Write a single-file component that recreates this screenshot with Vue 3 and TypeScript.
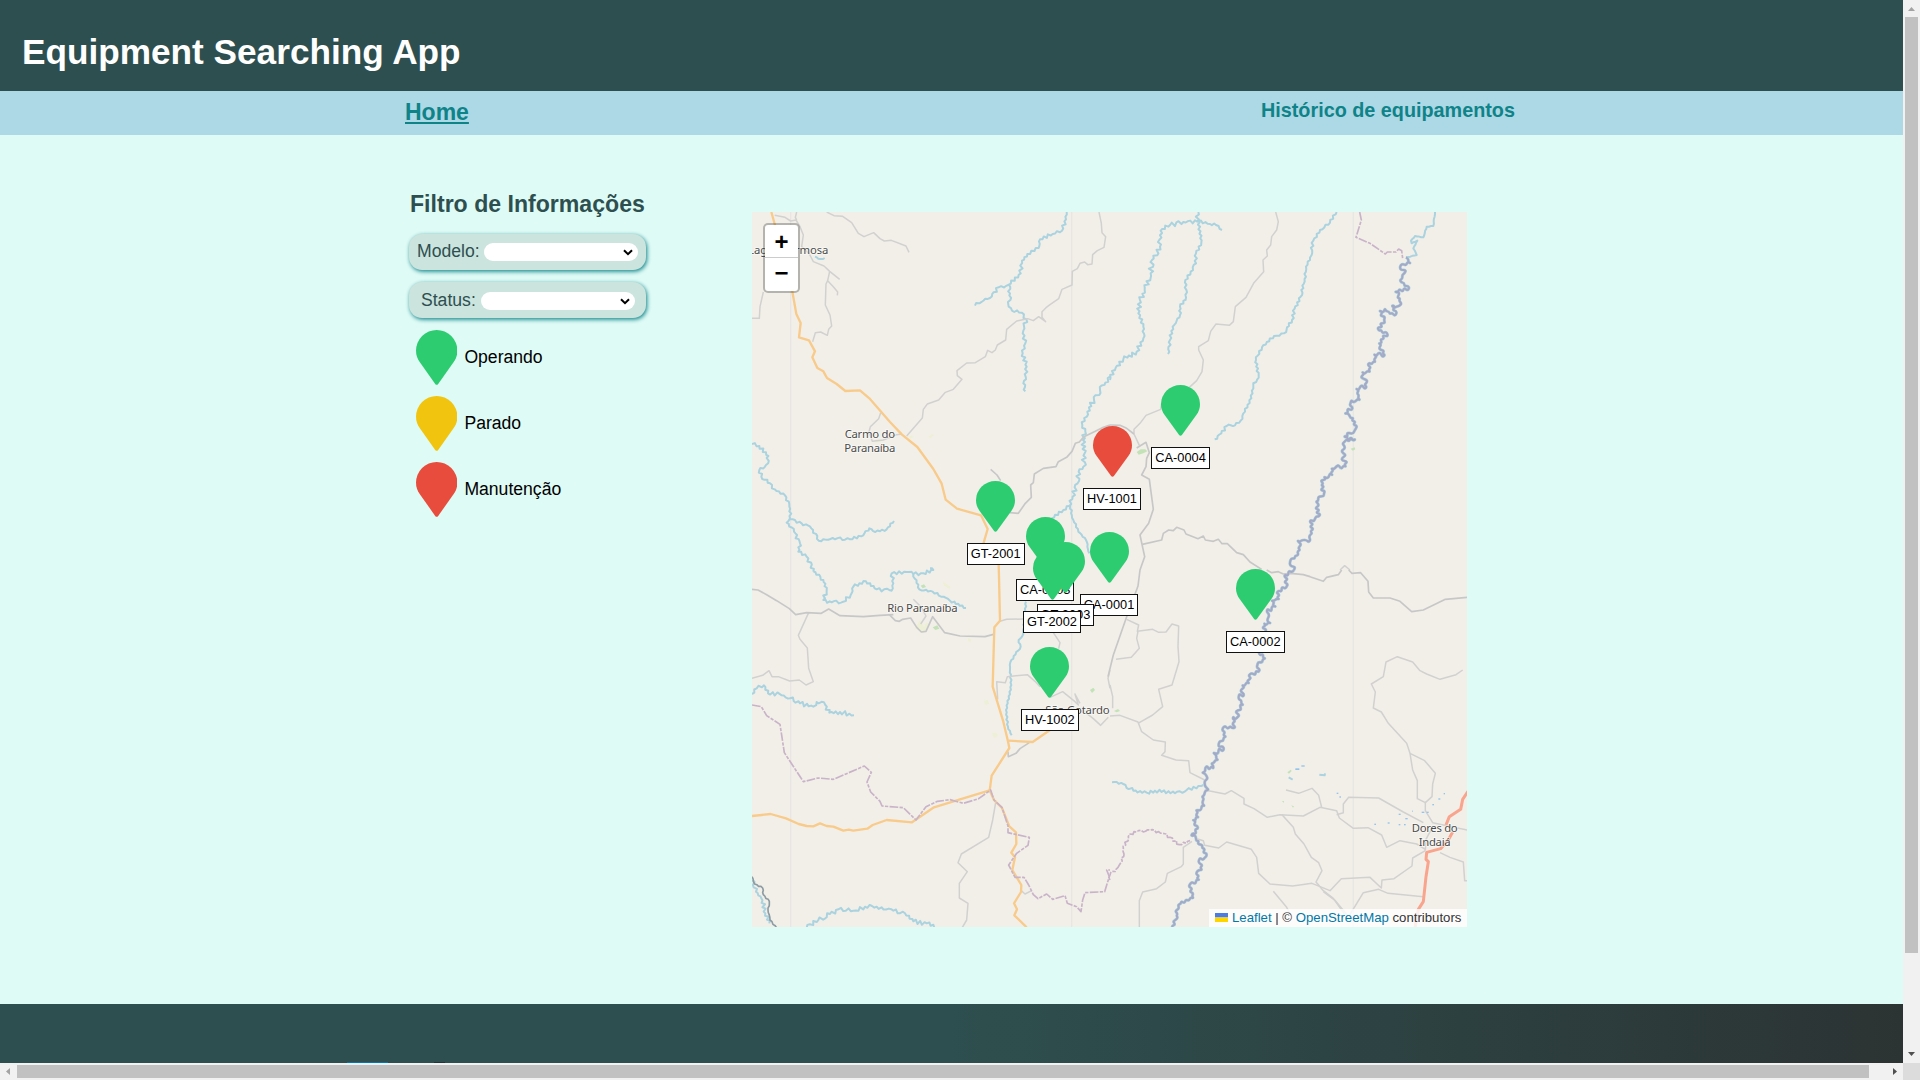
<script setup lang="ts">
type Kind = 'road' | 'minor' | 'river' | 'wide' | 'edge' | 'border' | 'orange' | 'red'

interface Feature {
  kind: Kind
  x: number
  y: number
  points: string
  sway?: number
}

interface Marker {
  code: string
  x: number
  y: number
  status: string
}

const W = 1080

// Map lines, grouped by tile; x and y are the tile's origin.
const features: Feature[] = [
  // north-west
  { kind: 'minor', x: 0, y: 0, points: '74,16 105,22 122,33 138,30 150,50 160,75 155,110 178,132 190,155 222,168 239,184 269,208' },
  { kind: 'minor', x: 0, y: 0, points: '140,6 136,22 140,30' },
  { kind: 'minor', x: 0, y: 0, points: '239,184 233,212 250,230 263,246 262,256' },
  { kind: 'minor', x: 0, y: 0, points: '233,212 228,222 226,285 240,315 245,348 236,358 232,376 212,366 196,368 188,395' },
  { kind: 'minor', x: 0, y: 0, points: '40,246 30,290 28,325 6,325' },
  { kind: 'minor', x: 0, y: 0, points: '230,6 252,17 278,19 305,38 325,70 342,80 371,68 390,86 403,93 424,91 468,108 477,127' },
  { kind: 'minor', x: 0, y: 0, points: '1047,6 1054,40 1056,68 1067,80 1062,112 1042,122 1028,134 1026,162 1013,164 1004,156 990,160 982,176 967,184 966,225 936,238 926,266 900,284 888,293 876,305 876,322 887,335 866,320 850,332 833,326 800,333 770,358 767,390 742,405 736,420 726,428 713,421 706,440 676,458 650,459 621,482 622,497 636,508 610,538 586,547 566,570 532,582 520,598 517,624 470,678' },
  { kind: 'minor', x: 0, y: 0, points: '392,608 386,626 361,650 357,666 367,694 400,690 440,674 456,672' },
  { kind: 'road', x: 0, y: 0, points: '1080,645 1060,652 1036,664 1002,680 988,696 976,700 966,724 950,742 925,755 918,770 880,775 853,792 850,818 842,825 844,862 826,880 805,910 780,908' },
  { kind: 'road', x: 0, y: 0, points: '722,778 741,795 752,812' },
  { kind: 'orange', x: 0, y: 0, points: '64,6 74,42 100,130 127,245 139,312 152,339 147,382 177,391 195,424 187,442 202,474 220,484 231,504 260,522 286,543 330,541 358,565 420,636 456,674 502,711 550,777 575,821 587,869 621,896 693,916 713,957 701,998 715,1035 746,1064 747,1100 750,1232 733,1252 728,1430 760,1535 773,1590 778,1614 725,1697 719,1742' },
  { kind: 'river', x: 0, y: 0, sway: 5, points: '950,6 948,28 936,62 908,72 870,88 866,114 832,132 816,152 812,190 776,224 746,232 720,264 706,266 675,287' },
  { kind: 'river', x: 0, y: 0, sway: 5, points: '776,224 780,250 776,290 786,302 815,308 829,328 820,362 826,400 818,430 830,470 828,508 820,520 826,544' },
  { kind: 'river', x: 0, y: 0, sway: 2, points: '195,140 205,146 212,147 224,144' },
  { kind: 'river', x: 0, y: 0, sway: 5, points: '6,702 28,708 55,738 48,765 28,780 34,800 60,820 74,838 105,856 118,890 120,925 110,938 132,965 150,1000 145,1025 170,1040 190,1085' },
  { kind: 'river', x: 0, y: 0, sway: 4, points: '120,928 155,940 184,955 206,992 248,984 300,988 340,976 358,955 376,966 410,958 432,933' },
  { kind: 'river', x: 0, y: 0, sway: 7, points: '1080,500 1066,518 1050,540 1032,570 1012,605 997,645 1006,665 999,690 1004,730 1000,770 986,785 983,820 968,860 958,888' },
  { kind: 'river', x: 0, y: 0, sway: 4, points: '958,888 940,900 905,925 890,950' },
  { kind: 'river', x: 0, y: 0, sway: 3, points: '960,888 970,930 985,965 1008,990 1018,1030' },
  // north-east
  { kind: 'river', x: W, y: 0, sway: 7, points: '265,6 262,35 220,36 180,45 152,62 150,110 126,150 122,190 104,240 90,270 85,310 100,350 100,385 80,425 40,448 15,480 0,510' },
  { kind: 'river', x: W, y: 0, sway: 4, points: '265,33 300,42 318,45 336,60' },
  { kind: 'river', x: W, y: 0, sway: 4, points: '266,30 274,98 258,130 258,160 242,185 226,210 228,262 210,290 210,315 188,350 180,390 174,432' },
  { kind: 'river', x: W, y: 0, sway: 4, points: '680,6 660,38 630,60 610,92 600,150 588,170 584,215 572,260 554,296 546,330 522,370 492,378 456,412 438,450 446,495 430,528 424,565 405,605 392,632 375,646 350,648 334,670 314,688' },
  { kind: 'minor', x: W, y: 0, points: '497,6 505,35 500,60 485,80 482,105 470,120 472,138 459,150 461,185 432,218 408,262 376,290 370,335 358,346 318,342 302,364 295,392 266,410 266,420 280,450 276,485 260,512 238,532' },
  { kind: 'minor', x: W, y: 0, points: '155,580 152,598 108,616 90,640 72,658 72,672 88,706' },
  { kind: 'road', x: W, y: 0, points: '0,645 30,646 50,655 72,672' },
  { kind: 'road', x: W, y: 0, points: '80,714 108,697 118,728 110,745 108,770 95,795 118,808 130,898 116,940 90,975 104,1040 90,1080 84,1128 50,1220 10,1335 -6,1400' },
  { kind: 'road', x: W, y: 0, points: '97,1003 155,990 160,970 176,960 190,962 200,952 222,960 228,972 264,986 280,978 286,990 310,994 325,988 336,1001 352,1001 380,1028 400,1034 420,1056 455,1078' },
  { kind: 'border', x: W, y: 0, points: '749,6 754,30 738,82 780,100 826,132 832,126 858,126 866,117 875,122 878,145' },
  { kind: 'river', x: W, y: 0, sway: 1, points: '975,6 970,48 950,50 940,82 915,78 903,92 905,100 922,92 910,115 920,135 888,142' },
  { kind: 'wide', x: W, y: 0, sway: 8, points: '888,142 902,160 872,165 884,190 870,210 898,235 855,245 870,265 868,288 845,286 860,310 840,312 825,296 808,302 822,330 806,362 832,370 806,400 825,435 792,432 796,456 778,458 780,486 756,486 770,530 738,536 750,570 724,570 728,592 704,610 730,624 738,655 702,680 736,688 704,695 700,730 708,770 664,775 668,796 642,800 634,826 642,850 618,875 626,920 602,930 606,970 596,996 562,992 570,1020 554,1046 540,1056 552,1080' },
  { kind: 'minor', x: W, y: 0, points: '690,1080 704,1067 720,1080' },
  // south-west
  { kind: 'road', x: 0, y: W, points: '6,58 24,60 50,74 80,92 118,116 137,134 170,128 214,130 236,117 270,137 340,140 390,136 430,134' },
  { kind: 'road', x: 0, y: W, points: '418,134 436,152 448,154 458,148 482,144 500,172 514,186 528,184 548,140 584,188 630,198 705,200 730,193' },
  { kind: 'minor', x: 0, y: W, points: '490,88 514,112 528,138 512,162' },
  { kind: 'minor', x: 0, y: W, points: '176,128 145,196 150,208 172,234 176,295 190,335 168,345 148,330 119,333 85,320 66,320 57,302 38,316 6,325' },
  { kind: 'minor', x: 0, y: W, points: '750,154 770,148 820,147' },
  { kind: 'minor', x: 0, y: W, points: '908,185 930,218 926,236' },
  { kind: 'minor', x: 0, y: W, points: '743,388 740,335 766,338 772,320 832,314 855,334 870,350' },
  { kind: 'minor', x: 0, y: W, points: '900,382 938,365 975,395 985,405 975,372 990,400' },
  { kind: 'minor', x: 0, y: W, points: '1010,430 1030,446 1052,466 1075,442' },
  { kind: 'minor', x: 0, y: W, points: '1080,300 1074,325 1080,355' },
  { kind: 'road', x: 0, y: W, points: '774,545 775,560 798,550 810,536 838,518' },
  { kind: 'minor', x: 0, y: W, points: '738,692 728,750 716,802 634,852 624,878 652,905 628,940 628,984 654,1000 650,1050 636,1074' },
  { kind: 'minor', x: 0, y: W, points: '812,960 825,972 845,962' },
  { kind: 'orange', x: 0, y: W, points: '6,738 62,732 108,745 146,762 170,768 190,769 210,760 230,768 250,770 280,782 296,779 310,782 352,776 368,765 410,750 486,757 552,712 630,688 719,661 732,690 756,714 778,769 798,787 799,822 784,848 795,862 787,900 814,945 813,966 792,1000 801,1018 793,1036 830,1072' },
  { kind: 'orange', x: 0, y: W, points: '775,512 848,516 900,480' },
  { kind: 'river', x: 0, y: W, sway: 5, points: '190,4 220,30 230,60 220,90 245,97 280,95 302,75 310,50 348,34 380,58 425,62 430,40 425,10 470,6 490,12 520,10 550,0 540,-5' },
  { kind: 'river', x: 0, y: W, sway: 3, points: '490,12 508,58 548,65 600,92 648,114' },
  { kind: 'river', x: 0, y: W, sway: 3, points: '828,95 826,130 820,192 806,210 812,230 784,270 780,300 784,345 768,420 774,470 785,496' },
  { kind: 'river', x: 0, y: W, sway: 7, points: '6,372 20,355 42,346 54,370 95,376 120,385 150,400 190,410 200,396 226,405 238,428 270,426 312,436' },
  { kind: 'river', x: 0, y: W, sway: 7, points: '170,1074 205,1050 240,1032 265,1018 310,1022 345,1010 380,1010 430,1022 465,1030 490,1054 530,1060 568,1074' },
  { kind: 'river', x: 0, y: W, sway: 6, points: '8,930 18,965 34,985 46,1030 58,1060' },
  { kind: 'edge', x: 0, y: W, sway: 2, points: '6,920 14,942 38,954 40,974 58,994 54,1020 60,1050 80,1074' },
  { kind: 'border', x: 0, y: W, points: '6,405 34,410 50,437 90,463 103,548 160,635 204,624 250,628 343,588 364,607 351,636 362,666 390,694 396,708 460,713 498,750 528,710 562,694 600,689 640,700 686,686 722,660 732,690 756,712 774,768 774,788 838,802 834,826 800,850 776,885 795,922 822,922 836,945 850,974 864,986 890,972 908,988 945,977 952,1000 980,1010 993,1025 998,990 1005,968 1064,965 1078,920 1070,900 1080,900' },
  // south-east
  { kind: 'road', x: W, y: W, points: '470,0 485,8 505,5 520,12 542,10 580,14 600,20 640,34 650,22 685,14 695,0' },
  { kind: 'road', x: W, y: W, points: '716,0 726,10 752,8 774,34 776,66 790,84 840,84 870,94 905,125 940,120 1006,88 1072,82' },
  { kind: 'minor', x: W, y: W, points: '50,148 86,165 82,184 128,178 146,187 168,186 186,162 206,168 204,230 207,275 186,345 146,358 158,410 128,435 84,460' },
  { kind: 'minor', x: W, y: W, points: '84,184 80,205 88,235 64,262 18,268' },
  { kind: 'minor', x: W, y: W, points: '0,345 8,380 8,415' },
  { kind: 'minor', x: W, y: W, points: '0,438 30,436 84,456 95,485 130,510 166,516 165,545 155,556 198,570 236,572 240,608 284,630' },
  { kind: 'minor', x: W, y: W, points: '284,660 345,672 364,662 402,685 402,702 432,716 472,742 510,734 580,738 630,712 680,722 688,744 730,775 774,773 815,795 830,832 870,812 920,822 946,838' },
  { kind: 'minor', x: W, y: W, points: '528,660 566,670 606,655 626,676 635,712' },
  { kind: 'minor', x: W, y: W, points: '680,734 700,728 700,702 716,682 806,684 880,726 940,758' },
  { kind: 'minor', x: W, y: W, points: '516,734 550,772 556,792 582,822 604,862 626,878 636,902 618,936 640,962 670,985 716,1050' },
  { kind: 'minor', x: W, y: W, points: '260,806 280,812 284,826 326,834 350,816 424,838 440,862 446,910 480,942 548,948 606,940 660,962 694,926 780,922 814,954 816,930 852,926 906,888 908,864 946,842' },
  { kind: 'minor', x: W, y: W, points: '640,965 676,992 716,1040 760,968 806,958 834,970 940,980' },
  { kind: 'minor', x: W, y: W, points: '490,964 530,1012 544,1040' },
  { kind: 'minor', x: W, y: W, points: '246,814 220,832 220,882 214,890 172,910 166,936 140,956 98,966 88,992 88,1074' },
  { kind: 'minor', x: W, y: W, points: '1058,300 1038,314 990,328 950,312 930,302 908,276 862,260 828,276 820,320 784,342 796,366 790,414 814,426 835,460 890,520 900,550 908,600 922,632 922,686 946,698 966,680 968,642 976,610 944,572 900,550' },
  { kind: 'minor', x: W, y: W, points: '946,698 946,722 968,758 1072,780' },
  { kind: 'minor', x: W, y: W, points: '990,848 1020,862 1060,876 1064,932 1072,932' },
  { kind: 'minor', x: W, y: W, points: '946,842 948,808 968,770' },
  { kind: 'river', x: W, y: W, sway: 5, points: '6,637 40,642 70,662 110,668 135,662 195,670 230,660 280,645' },
  { kind: 'border', x: W, y: W, points: '0,930 0,915 18,898 28,885 42,852 40,836 55,800 72,785 120,780 158,790 180,802 208,824 240,812', sway: 4 },
  { kind: 'wide', x: W, y: W, sway: 8, points: '552,0 524,14 530,50 506,62 508,88 484,92 498,110 470,125 482,160 462,160 466,185 462,220 450,256 466,265 442,285 446,306 416,318 418,340 396,346 402,372 386,380 400,405 384,420 382,442 370,440 376,472 338,474 348,500 326,520 342,536 310,548 324,570 304,580 310,596 285,594 276,608 290,618 284,640 296,660 276,680 284,708 258,720 266,742 248,750 264,776 244,798 266,812 276,834 290,858 270,864 276,900 260,906 268,930 240,942 250,985 214,994 196,1024 196,1050 186,1074' },
  { kind: 'red', x: W, y: W, points: '1074,664 1058,688 1052,718 1018,740 1008,765' },
  { kind: 'red', x: W, y: W, points: '1028,786 1016,808 992,836 950,847 948,868 955,875 948,920 940,995 925,1018 915,1074' },
]

// Winds a polyline from side to side, always the same way for the same seed.
function wind(points: string, sway: number, seed: number): [number, number][] {
  const pts = points.split(' ').map((p) => p.split(',').map(Number) as [number, number])
  if (!sway) return pts
  const out: [number, number][] = []
  let s = seed * 7919 + 17
  const next = () => {
    s = (s * 16807) % 2147483647
    return s / 2147483647
  }
  let side = 1
  for (let i = 0; i < pts.length - 1; i++) {
    const [ax, ay] = pts[i]
    const [bx, by] = pts[i + 1]
    const len = Math.hypot(bx - ax, by - ay) || 1
    const n = Math.max(1, Math.round(len / 7))
    for (let k = 0; k < n; k++) {
      const t = k / n
      const off = k === 0 ? 0 : side * sway * (0.2 + next() * 0.8)
      side = next() > 0.2 ? -side : side
      out.push([ax + (bx - ax) * t - ((by - ay) / len) * off, ay + (by - ay) * t + ((bx - ax) / len) * off])
    }
  }
  out.push(pts[pts.length - 1])
  return out
}

// Only the big meandering river is drawn with curves; the rest keeps its corners.
function toPath(f: Feature, seed: number): string {
  const pts = wind(f.points, f.sway ?? 0, seed + 1).map(([x, y]) => [x + f.x, y + f.y])
  const at = (p: number[]) => `${p[0].toFixed(1)} ${p[1].toFixed(1)}`
  if (f.kind !== 'wide') return 'M' + pts.map(at).join('L')
  let d = 'M' + at(pts[0])
  for (let i = 1; i < pts.length - 1; i++) {
    d += `Q${at(pts[i])} ${at([(pts[i][0] + pts[i + 1][0]) / 2, (pts[i][1] + pts[i + 1][1]) / 2])}`
  }
  return `${d}L${at(pts[pts.length - 1])}`
}

const order: Kind[] = ['river', 'minor', 'road', 'edge', 'wide', 'orange', 'red', 'border']
const lines = features
  .map((f, i) => ({ kind: f.kind, d: toPath(f, i) }))
  .sort((a, b) => order.indexOf(a.kind) - order.indexOf(b.kind))
const water = lines.filter((l) => l.kind === 'wide')

const ponds = [
  [556, 595, 12, 5], [574, 586, 10, 4], [680, 668, 5, 4], [688, 679, 5, 4], [793, 761, 5, 4], [833, 757, 6, 4],
  [866, 731, 6, 4], [866, 762, 5, 4], [886, 744, 7, 4], [882, 762, 5, 4], [935, 725, 8, 4], [950, 725, 6, 4],
  [967, 702, 5, 4], [985, 685, 6, 4], [1001, 669, 4, 4], [906, 722, 3, 3],
]

const colors: Record<string, string> = { Operando: '#2ecc71', Parado: '#f1c40f', Manutenção: '#e74c3c' }

// x is the tip of the pin, y its top.
const markers: Marker[] = [
  { code: 'CA-0004', x: 428.5, y: 173, status: 'Operando' },
  { code: 'HV-1001', x: 360, y: 214, status: 'Manutenção' },
  { code: 'GT-2001', x: 243.7, y: 269, status: 'Operando' },
  { code: 'CA-0003', x: 293.2, y: 305, status: 'Operando' },
  { code: 'CA-0001', x: 357, y: 319.6, status: 'Operando' },
  { code: 'GT-2003', x: 313.4, y: 329.6, status: 'Operando' },
  { code: 'CA-0002', x: 503.3, y: 357, status: 'Operando' },
  { code: 'GT-2002', x: 300, y: 337, status: 'Operando' },
  { code: 'HV-1002', x: 297.8, y: 435, status: 'Operando' },
]

const pin = 'M0 62A62 62 0 0 1 124 62C124 75 120 86 113 96L67 161Q62 168 57 161L11 96C4 86 0 75 0 62Z'
</script>

<template>
  <div class="window">
    <div class="page">
      <header class="header"><h1>Equipment Searching App</h1></header>
      <nav class="nav">
        <a class="home">Home</a>
        <a class="history">Histórico de equipamentos</a>
      </nav>
      <main class="main">
        <section class="filters">
          <h2>Filtro de Informações</h2>
          <div v-for="name in ['Modelo', 'Status']" :key="name" class="filter" :class="name.toLowerCase()">
            <label>{{ name }}:</label>
            <div class="select">
              <svg viewBox="0 0 10 7" width="10" height="7"><path d="M1 1.2L5 5.2L9 1.2" fill="none" stroke="#000" stroke-width="2" /></svg>
            </div>
          </div>
          <ul class="legend">
            <li v-for="(color, status) in colors" :key="status">
              <svg viewBox="0 0 124 165" width="41.4" height="55"><path :d="pin" :fill="color" /></svg>
              <span>{{ status }}</span>
            </li>
          </ul>
        </section>
        <section class="map">
          <svg class="tiles" viewBox="6 6 2145 2145" width="715" height="715">
            <path class="grid" d="M122 6V2151M965 6V2151M1810 6V2151" />
            <g class="patch">
              <path d="M476 680l10-4 4 6-8 5zM535 680l12-8 5 3-10 10zM372 692l20-2 1 6-18 3zM495 1255l15-25 12 20 8-14 8 10-18 22-10-6zM580 1115l22 16-4 6-18-12zM654 1284l10 4-2 8-10-4zM702 1472l12-2 3 12-12 2zM725 1570l14-2 5 10-12 6z" />
            </g>
            <g class="green">
              <path d="M1160 726l12-8 14 0 6 6-12 6-14 4zM512 1127l10-4 6 8-10 4zM548 1252l14-6 6 10-12 4zM1020 1440l10-7 5 7-9 9zM1092 1503l12-6 6 6-10 4zM1612 1687l10-8 3 4-8 8zM1596 1773l6 0-1 6zM1624 1786l8 3-3 4zM1802 716l12-4 2 6-8 4z" />
            </g>
            <path v-for="(l, i) in water" :key="'w' + i" class="under" :d="l.d" />
            <path v-for="(l, i) in lines" :key="i" :class="l.kind" :d="l.d" />
            <rect v-for="(p, i) in ponds" :key="'p' + i" class="pond" :x="p[0] + 1080" :y="p[1] + 1080" :width="p[2]" :height="p[3]" />
            <path class="lake" d="M1616 1702l12 7M1708 1694l16 2 1-6" />
            <g class="places">
              <text x="-5" y="132" textLength="240">Lagoa Formosa</text>
              <text x="284" y="683" textLength="151">Carmo do</text>
              <text x="283" y="725" textLength="153">Paranaíba</text>
              <text x="412" y="1206" textLength="211">Rio Paranaíba</text>
              <text x="886" y="1511" textLength="193">São Gotardo</text>
              <text x="1985" y="1866" textLength="138">Dores do</text>
              <text x="2006" y="1907" textLength="96">Indaiá</text>
            </g>
          </svg>
          <div class="zoom"><span>+</span><span>−</span></div>
          <div v-for="m in markers" :key="m.code" class="marker" :style="{ left: m.x - 19.5 + 'px', top: m.y + 'px' }">
            <svg viewBox="0 0 124 165" width="39" height="51" preserveAspectRatio="none"><path :d="pin" :fill="colors[m.status]" /></svg>
            <span class="tag">{{ m.code }}</span>
          </div>
          <div class="credit">
            <svg viewBox="0 0 13 9" width="13" height="9"><path fill="#4C7BE1" d="M0 0h13v4.5H0z" /><path fill="#FFD500" d="M0 4.5h13V9H0z" /></svg>
            <a>Leaflet</a> | © <a>OpenStreetMap</a> contributors
          </div>
        </section>
      </main>
      <footer class="footer"><i class="blue"></i><i class="dark"></i></footer>
    </div>
    <div class="bar vertical">
      <svg viewBox="0 0 17 17"><path d="M5 11h7L8.5 7z" fill="#a3a3a3" /></svg>
      <div class="thumb"></div>
      <svg viewBox="0 0 17 17"><path d="M5 6h7L8.5 10z" fill="#505050" /></svg>
    </div>
    <div class="bar horizontal">
      <svg viewBox="0 0 17 17"><path d="M10 5v7L6 8.5z" fill="#a3a3a3" /></svg>
      <div class="thumb"></div>
      <svg viewBox="0 0 17 17"><path d="M7 5v7l4-3.5z" fill="#505050" /></svg>
    </div>
    <div class="corner"></div>
  </div>
</template>

<style>
body {
  margin: 0;
  overflow: hidden;
}
</style>

<style scoped>
.window {
  display: grid;
  grid-template-columns: 1903px 17px;
  grid-template-rows: 1063px 17px;
  width: 1920px;
  height: 1080px;
  overflow: hidden;
  font-family: "Liberation Sans", Arial, sans-serif;
  font-size: 17.6px;
}
.page {
  display: flex;
  flex-direction: column;
  overflow: hidden;
  background: #dffbf6;
}
.header {
  height: 91px;
  box-sizing: border-box;
  padding: 32px 0 0 22px;
  background: #2e4f4f;
}
h1 {
  margin: 0;
  font-size: 35.2px;
  line-height: 40px;
  color: #fff;
}
.nav {
  display: flex;
  height: 44px;
  background: #add8e6;
  color: #0e8388;
  font-weight: bold;
}
.home {
  margin-left: 405px;
  padding-top: 8px;
  width: 856px;
  font-size: 23px;
  line-height: 26px;
  text-decoration: underline;
}
.history {
  padding-top: 7px;
  font-size: 19.8px;
  line-height: 24px;
}
.main {
  display: flex;
  height: 869px;
}
.filters {
  width: 237px;
  margin-left: 409px;
  padding-top: 56px;
}
h2 {
  margin: 0 0 17px 1px;
  font-size: 23.1px;
  line-height: 26px;
  white-space: nowrap;
  color: #2e4f4f;
}
.filter {
  display: flex;
  align-items: flex-start;
  box-sizing: border-box;
  height: 36px;
  margin-bottom: 12px;
  padding: 9px 0 0 8px;
  border-radius: 13px;
  background: #cbe4de;
  box-shadow: 1px 1.5px 4px #0e8388;
  color: #2e4f4f;
}
.filter label {
  width: 67px;
  line-height: 20px;
  margin-top: -2px;
}
.filter.status {
  padding: 10px 0 0 12px;
}
.filter.status label {
  width: 60px;
}
.select {
  display: flex;
  align-items: center;
  justify-content: flex-end;
  box-sizing: border-box;
  width: 154px;
  height: 18px;
  padding-right: 5px;
  border-radius: 9px;
  background: #fff;
}
.legend {
  margin: 0;
  padding: 0 0 0 7px;
  list-style: none;
}
.legend li {
  display: flex;
  height: 66px;
}
.legend span {
  margin: 17px 0 0 7px;
  line-height: 20px;
}
.map {
  position: relative;
  width: 715px;
  height: 715px;
  margin: 77px 0 0 106px;
  overflow: hidden;
  background: #f2efe9;
}
.tiles {
  display: block;
}
.tiles path {
  fill: none;
  stroke-linejoin: round;
}
.tiles .grid {
  stroke: #dfdfe0;
  stroke-width: 2;
}
.tiles .minor {
  stroke: #d2d1d0;
  stroke-width: 4.5;
}
.tiles .road {
  stroke: #c8c7c8;
  stroke-width: 5;
}
.tiles .river {
  stroke: #aad3df;
  stroke-width: 6;
}
.tiles .under {
  stroke: #aad3df;
  stroke-width: 9;
}
.tiles .wide {
  stroke: #a5a9c6;
  stroke-width: 6;
}
.tiles .edge {
  stroke: #8d9ca3;
  stroke-width: 5;
}
.tiles .border {
  stroke: #c9b3c8;
  stroke-width: 5;
  stroke-dasharray: 26 4 10 4;
}
.tiles .orange {
  stroke: #f8cb8b;
  stroke-width: 7;
}
.tiles .red {
  stroke: #f9a48c;
  stroke-width: 9;
}
.tiles .patch path {
  fill: #eef0d5;
}
.tiles .green path {
  fill: #c4e2b8;
}
.tiles .lake {
  stroke: #aad3df;
  stroke-width: 6;
}
.pond {
  fill: #93c4ee;
}
.places {
  font-family: "Noto Sans", sans-serif;
  font-size: 34px;
  fill: #4c4c4a;
  stroke: rgba(255, 255, 255, 0.6);
  stroke-width: 5px;
  paint-order: stroke;
}
.zoom {
  position: absolute;
  left: 11px;
  top: 11px;
  width: 33px;
  height: 66px;
  border: 2px solid rgba(0, 0, 0, 0.25);
  border-radius: 5px;
  background: #fff;
  background-clip: padding-box;
}
.zoom span {
  display: block;
  box-sizing: border-box;
  height: 33px;
  font: bold 24px/33px "Liberation Sans", Arial, sans-serif;
  text-align: center;
}
.zoom span:first-child {
  border-bottom: 1px solid #ccc;
}
.zoom span:last-child {
  line-height: 30px;
}
.marker {
  position: absolute;
  display: flex;
  flex-direction: column;
  align-items: center;
  width: 39px;
}
.tag {
  box-sizing: border-box;
  flex: none;
  height: 22px;
  margin-top: 11px;
  padding: 0 3px;
  border: 1px solid #111;
  background: #fff;
  font-size: 12.8px;
  line-height: 19px;
  white-space: nowrap;
}
.credit {
  position: absolute;
  right: 0;
  bottom: 0;
  box-sizing: border-box;
  width: 258px;
  height: 18px;
  padding-left: 6px;
  background: rgba(255, 255, 255, 0.8);
  color: #333;
  font-size: 13.2px;
  line-height: 17px;
  white-space: nowrap;
}
.credit svg {
  margin-right: 4px;
}
.credit a {
  color: #0078a8;
}
.footer {
  display: flex;
  align-items: flex-end;
  height: 59px;
  background: linear-gradient(90deg, #2e4f4f 50%, #2c3333);
}
.footer i {
  height: 1px;
}
.blue {
  width: 41px;
  margin-left: 347px;
  background: #0077b5;
}
.dark {
  width: 11px;
  margin-left: 46px;
  background: #203538;
}
.bar {
  display: flex;
  background: #f1f1f1;
}
.bar svg {
  width: 17px;
  height: 17px;
}
.bar .thumb {
  background: #c1c1c1;
}
.vertical {
  flex-direction: column;
  justify-content: space-between;
}
.vertical .thumb {
  width: 13px;
  height: 936px;
  margin: 0 2px 93px;
}
.horizontal {
  justify-content: space-between;
}
.horizontal .thumb {
  width: 1852px;
  height: 13px;
  margin: 2px 17px 0 0;
}
.corner {
  background: #dcdcdc;
}
</style>
